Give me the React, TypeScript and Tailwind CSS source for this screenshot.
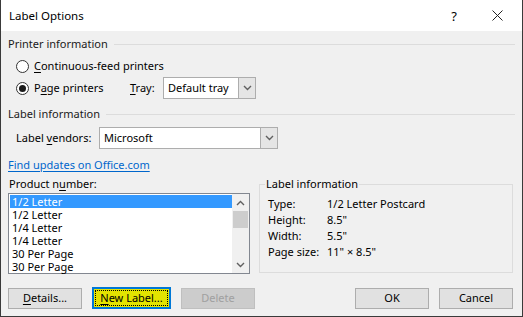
import React from "react";

const font = { fontFamily: '"Noto Sans", "Open Sans", sans-serif' };

const Key = ({ children }: { children: React.ReactNode }) => <span className="underline underline-offset-2">{children}</span>;

const GroupHeader = ({ title }: { title: string }) => (
  <div className="flex items-center h-4 gap-[6px]">
    <span className="text-[#1a1a1a] whitespace-nowrap">{title}</span>
    <div className="flex-1 h-px bg-[#dcdcdc]" />
  </div>
);

const Radio = ({ checked }: { checked?: boolean }) => (
  <div className="w-[13px] h-[13px] rounded-full border border-[#333] bg-white flex items-center justify-center">
    {checked && <div className="w-[7px] h-[7px] rounded-full bg-[#1a1a1a]" />}
  </div>
);

const Chevron = ({ up }: { up?: boolean }) => (
  <svg width="9" height="6" viewBox="0 0 9 6">
    <path d={up ? "M1 5 L4.5 1.5 L8 5" : "M1 1 L4.5 4.5 L8 1"} fill="none" stroke="#606060" strokeWidth="1.4" />
  </svg>
);

const Combo = ({ value, w }: { value: string; w: string }) => (
  <div className={`flex h-[22px] border border-[#adadad] bg-white ${w}`}>
    <div className="flex-1 flex items-center pl-[4px] text-black">{value}</div>
    <div className="w-[17px] bg-[#e5e5e5] border-l border-[#adadad] flex items-center justify-center">
      <Chevron />
    </div>
  </div>
);

const items = ["1/2 Letter", "1/2 Letter", "1/4 Letter", "1/4 Letter", "30 Per Page", "30 Per Page"];

const info: [string, string][] = [
  ["Type:", "1/2 Letter Postcard"],
  ["Height:", "8.5\""],
  ["Width:", "5.5\""],
  ["Page size:", "11\" \u00d7 8.5\""],
];

export default function App() {
  return (
    <div style={font} className="w-[523px] h-[317px] bg-[#f0f0f0] border-x border-b border-[#3a3a3a] text-[11px] leading-4 text-black flex flex-col overflow-hidden">
      <div className="h-[31px] bg-white flex items-center pl-2 shrink-0">
        <span className="flex-1 text-[11.5px]">Label Options</span>
        <span className="w-[10px] text-center mr-[33px] text-[13px]">?</span>
        <svg width="11" height="11" viewBox="0 0 11 11" className="mr-[19px]">
          <path d="M0.5 0.5 L10.5 10.5 M10.5 0.5 L0.5 10.5" stroke="#222" strokeWidth="1" />
        </svg>
      </div>

      <div className="flex flex-col pl-[7px] pr-[7px]">
        <div className="mt-[5px]">
          <GroupHeader title="Printer information" />
        </div>
        <div className="mt-[6px] h-4 flex items-center gap-[5px] pl-[8px]">
          <Radio />
          <span>
            <Key>C</Key>ontinuous-feed printers
          </span>
        </div>
        <div className="mt-[3px] h-[22px] flex items-center pl-[8px]">
          <div className="flex items-center gap-[5px] w-[114px]">
            <Radio checked />
            <span>
              P<Key>a</Key>ge printers
            </span>
          </div>
          <span className="w-[33px]">
            <Key>T</Key>ray:
          </span>
          <Combo value="Default tray" w="w-[93px]" />
        </div>

        <div className="mt-[7px]">
          <GroupHeader title="Label information" />
        </div>
        <div className="mt-[5px] h-[22px] flex items-center pl-[8px]">
          <span className="w-[83px]">
            Label <Key>v</Key>endors:
          </span>
          <Combo value="Microsoft" w="w-[179px]" />
        </div>

        <div className="mt-[8px] h-4 flex items-center">
          <span className="text-[#0066cc] underline underline-offset-2">Find updates on Office.com</span>
        </div>

        <div className="mt-[3px] flex gap-[9px]">
          <div className="flex flex-col w-[242px]">
            <div className="h-4 flex items-center pl-px">
              Product n<Key>u</Key>mber:
            </div>
            <div className="mt-px h-[81px] border border-[#828790] bg-white flex">
              <div className="flex-1 flex flex-col pt-px pl-px">
                {items.map((t, i) => (
                  <div key={i} className={`h-[13px] flex items-center pl-[2px] leading-[13px] ${i === 0 ? "bg-[#3399ff] text-white" : ""}`}>
                    {t}
                  </div>
                ))}
              </div>
              <div className="w-[17px] bg-[#f0f0f0] flex flex-col">
                <div className="h-[17px] flex items-center justify-center">
                  <Chevron up />
                </div>
                <div className="h-[17px] bg-[#cdcdcd] mx-px" />
                <div className="flex-1" />
                <div className="h-[17px] flex items-center justify-center">
                  <Chevron />
                </div>
              </div>
            </div>
          </div>

          <div className="flex-1 mr-[2px] mt-[8px] h-[89px] border border-[#dcdcdc] relative flex flex-col pl-[8px] pt-[11px]">
            <span className="absolute -top-[9px] left-[5px] bg-[#f0f0f0] px-px">Label information</span>
            {info.map(([k, v]) => (
              <div key={k} className="h-[16px] flex items-center">
                <span className="w-[59px]">{k}</span>
                <span>{v}</span>
              </div>
            ))}
          </div>
        </div>

        <div className="mt-[13px] flex items-center">
          <div className="w-[74px] h-[21px] border border-[#adadad] bg-[#e1e1e1] flex items-center justify-center">
            <span>
              <Key>D</Key>etails...
            </span>
          </div>
          <div className="ml-[10px] w-[79px] h-[22px] border-2 border-[#0078d7] bg-[#e3e300] flex items-center justify-center p-px">
            <div className="w-full h-full border border-dotted border-black flex items-center justify-center">
              <span>
                <Key>N</Key>ew Label...
              </span>
            </div>
          </div>
          <div className="ml-[10px] w-[74px] h-[21px] border border-[#bfbfbf] bg-[#cccccc] flex items-center justify-center text-[#a0a0a0]">
            Delete
          </div>
          <div className="flex-1" />
          <div className="w-[74px] h-[21px] border border-[#adadad] bg-[#e1e1e1] flex items-center justify-center">OK</div>
          <div className="ml-[10px] mr-[2px] w-[74px] h-[21px] border border-[#adadad] bg-[#e1e1e1] flex items-center justify-center">Cancel</div>
        </div>
      </div>
    </div>
  );
}
